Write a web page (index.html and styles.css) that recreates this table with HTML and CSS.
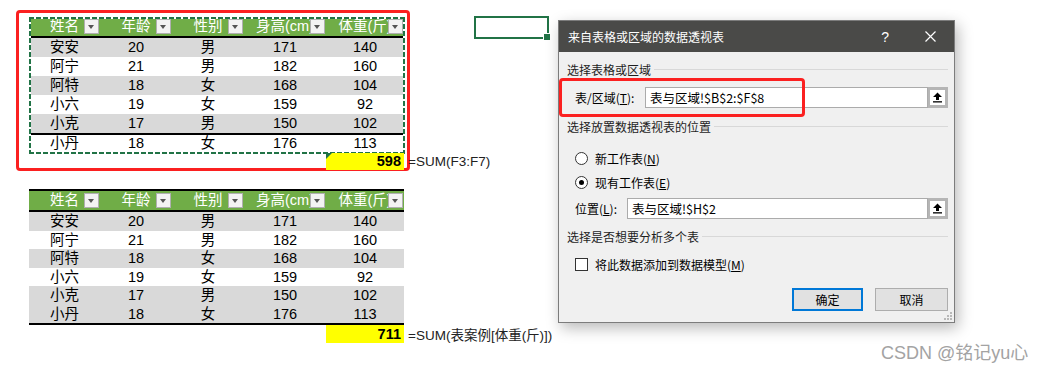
FILE: index.html
```html
<!DOCTYPE html>
<html>
<head>
<meta charset="utf-8">
<link rel="stylesheet" href="styles.css">
</head>
<body>
<div class="sheet">
  <div class="highlight">
    <div class="tbl tbl-top">
      <div class="row head">
        <div class="c">姓名<span class="fb"></span></div>
        <div class="c">年龄<span class="fb"></span></div>
        <div class="c">性别<span class="fb"></span></div>
        <div class="c">身高(cm)<span class="fb"></span></div>
        <div class="c">体重(斤)<span class="fb"></span></div>
      </div>
      <div class="row g"><div class="c">安安</div><div class="c">20</div><div class="c">男</div><div class="c">171</div><div class="c">140</div></div>
      <div class="row"><div class="c">阿宁</div><div class="c">21</div><div class="c">男</div><div class="c">182</div><div class="c">160</div></div>
      <div class="row g"><div class="c">阿特</div><div class="c">18</div><div class="c">女</div><div class="c">168</div><div class="c">104</div></div>
      <div class="row"><div class="c">小六</div><div class="c">19</div><div class="c">女</div><div class="c">159</div><div class="c">92</div></div>
      <div class="row g"><div class="c">小克</div><div class="c">17</div><div class="c">男</div><div class="c">150</div><div class="c">102</div></div>
      <div class="row last"><div class="c">小丹</div><div class="c">18</div><div class="c">女</div><div class="c">176</div><div class="c">113</div></div>
    </div>
    <div class="total">
      <div class="sum"><i class="err"></i>598</div>
      <span class="formula">=SUM(F3:F7)</span>
    </div>
  </div>

  <div class="tbl tbl-bottom">
    <div class="row head">
      <div class="c">姓名<span class="fb"></span></div>
      <div class="c">年龄<span class="fb"></span></div>
      <div class="c">性别<span class="fb"></span></div>
      <div class="c">身高(cm)<span class="fb"></span></div>
      <div class="c">体重(斤)<span class="fb"></span></div>
    </div>
    <div class="row g"><div class="c">安安</div><div class="c">20</div><div class="c">男</div><div class="c">171</div><div class="c">140</div></div>
    <div class="row"><div class="c">阿宁</div><div class="c">21</div><div class="c">男</div><div class="c">182</div><div class="c">160</div></div>
    <div class="row g"><div class="c">阿特</div><div class="c">18</div><div class="c">女</div><div class="c">168</div><div class="c">104</div></div>
    <div class="row"><div class="c">小六</div><div class="c">19</div><div class="c">女</div><div class="c">159</div><div class="c">92</div></div>
    <div class="row g"><div class="c">小克</div><div class="c">17</div><div class="c">男</div><div class="c">150</div><div class="c">102</div></div>
    <div class="row g"><div class="c">小丹</div><div class="c">18</div><div class="c">女</div><div class="c">176</div><div class="c">113</div></div>
  </div>
  <div class="total total2">
    <div class="sum">711</div>
    <span class="formula">=SUM(表案例[体重(斤)])</span>
  </div>
</div>

<div class="active-cell"><span class="handle"></span></div>

<div class="dialog">
  <div class="title">
    <span class="title-text">来自表格或区域的数据透视表</span>
    <span class="help">?</span>
    <svg class="close" width="11" height="11" viewBox="0 0 11 11"><path d="M0.5 0.5 L10.5 10.5 M10.5 0.5 L0.5 10.5" stroke="#fff" stroke-width="1.2"/></svg>
  </div>
  <div class="body">
    <div class="heading">选择表格或区域</div>
    <div class="field-row">
      <span class="label label1">表/区域(<u>T</u>):</span>
      <div class="input">表与区域!$B$2:$F$8</div>
      <div class="pick"><svg width="11" height="11" viewBox="0 0 11 11"><path d="M5.5 0.5 L10 5 H7 V8 H4 V5 H1 Z" fill="#000"/><rect x="1" y="9.2" width="9" height="1.3" fill="#000"/></svg></div>
    </div>
    <div class="heading h2">选择放置数据透视表的位置</div>
    <div class="radios">
      <div class="opt"><span class="radio"></span>新工作表(<u>N</u>)</div>
      <div class="opt"><span class="radio on"></span>现有工作表(<u>E</u>)</div>
    </div>
    <div class="field-row fr2">
      <span class="label label2">位置(<u>L</u>):</span>
      <div class="input">表与区域!$H$2</div>
      <div class="pick"><svg width="11" height="11" viewBox="0 0 11 11"><path d="M5.5 0.5 L10 5 H7 V8 H4 V5 H1 Z" fill="#000"/><rect x="1" y="9.2" width="9" height="1.3" fill="#000"/></svg></div>
    </div>
    <div class="heading h3">选择是否想要分析多个表</div>
    <div class="opt check-row"><span class="checkbox"></span>将此数据添加到数据模型(<u>M</u>)</div>
    <div class="buttons">
      <div class="btn primary">确定</div>
      <div class="btn">取消</div>
    </div>
  </div>
  <svg class="grip" width="8" height="8" viewBox="0 0 8 8">
    <rect x="6" y="0" width="2" height="2" fill="#b8b8b8"/>
    <rect x="3" y="3" width="2" height="2" fill="#b8b8b8"/>
    <rect x="6" y="3" width="2" height="2" fill="#b8b8b8"/>
    <rect x="0" y="6" width="2" height="2" fill="#b8b8b8"/>
    <rect x="3" y="6" width="2" height="2" fill="#b8b8b8"/>
    <rect x="6" y="6" width="2" height="2" fill="#b8b8b8"/>
  </svg>
  <div class="mark"></div>
</div>

<div class="watermark">CSDN @铭记yu心</div>
</body>
</html>
```

FILE: styles.css
```css
html, body {
  margin: 0;
  padding: 0;
}
body {
  width: 1046px;
  height: 369px;
  overflow: hidden;
  background: #fff;
  position: relative;
  font-family: "Liberation Sans", "Noto Sans CJK SC", sans-serif;
  color: #000;
}

.sheet {
  padding: 10px 0 0 16px;
  display: flex;
  flex-direction: column;
  align-items: flex-start;
}

.highlight {
  width: 394px;
  height: 161px;
  box-sizing: border-box;
  border: 3px solid #fb2020;
  border-radius: 4px;
  padding: 4px 0 0 10px;
}

.tbl {
  width: 375px;
  position: relative;
  font-size: 14.5px;
}

.row {
  display: grid;
  grid-template-columns: 71px 72px 72px 82px 78px;
  height: 19px;
  line-height: 19px;
  text-align: center;
}

.c {
  position: relative;
  overflow: hidden;
  white-space: nowrap;
}

.head {
  background: #70ad47;
  color: #fff;
  border-bottom: 2px solid #000;
}

.g {
  background: #d9d9d9;
}

.fb {
  position: absolute;
  right: 1px;
  top: 2px;
  width: 15px;
  height: 15px;
  box-sizing: border-box;
  border: 1px solid #b0b0b0;
  background: #f3f3f3;
}
.fb::after {
  content: "";
  position: absolute;
  left: 3px;
  top: 5px;
  border-left: 3.5px solid transparent;
  border-right: 3.5px solid transparent;
  border-top: 4px solid #555;
}

.tbl-top .last {
  border-top: 2px solid #000;
  height: 17px;
  line-height: 17px;
}

.tbl-top::after {
  content: "";
  position: absolute;
  top: 0;
  left: 0;
  right: -1px;
  bottom: -2px;
  background:
    repeating-linear-gradient(90deg, #217346 0 5px, #fff 5px 7px) top left / 100% 2px no-repeat,
    repeating-linear-gradient(90deg, #217346 0 5px, #fff 5px 7px) bottom left / 100% 2px no-repeat,
    repeating-linear-gradient(180deg, #217346 0 5px, #fff 5px 7px) top left / 2px 100% no-repeat,
    repeating-linear-gradient(180deg, #217346 0 5px, #fff 5px 7px) top right / 2px 100% no-repeat;
}

.total {
  display: flex;
  align-items: center;
  margin: 1px 0 0 297px;
  height: 17px;
}
.sum {
  flex: none;
  width: 78px;
  height: 17px;
  line-height: 17px;
  background: #ffff00;
  text-align: right;
  font-weight: bold;
  font-size: 14.5px;
  padding-right: 3px;
  box-sizing: border-box;
  position: relative;
}
.err {
  position: absolute;
  left: 0;
  top: 0;
  width: 0;
  height: 0;
  border-top: 6px solid #217346;
  border-right: 6px solid transparent;
}
.formula {
  flex: none;
  margin-left: 4px;
  font-size: 13.5px;
  color: #222;
  white-space: nowrap;
}

.tbl-bottom {
  margin: 18px 0 0 13px;
  border-top: 2px solid #000;
  border-bottom: 2px solid #000;
}
.tbl-bottom .row:not(.head) {
  height: 18.5px;
  line-height: 18.5px;
}
.total2 {
  margin: 0 0 0 310px;
  height: 18px;
}
.total2 .sum {
  height: 18px;
  line-height: 18px;
}

.active-cell {
  position: absolute;
  left: 474px;
  top: 16px;
  width: 75px;
  height: 23px;
  box-sizing: border-box;
  border: 2px solid #217346;
}
.handle {
  position: absolute;
  right: -4px;
  bottom: -4px;
  width: 6px;
  height: 6px;
  background: #217346;
  border: 1px solid #fff;
}

.dialog {
  position: absolute;
  left: 558px;
  top: 20px;
  width: 397px;
  height: 303px;
  box-sizing: border-box;
  background: #f0f0f0;
  border: 1px solid #7c7c7c;
  box-shadow: 3px 5px 14px rgba(0, 0, 0, 0.28);
  font-family: "Noto Sans CJK SC", sans-serif;
  font-size: 12px;
  color: #000;
  display: flex;
  flex-direction: column;
}

.mark {
  position: absolute;
  left: 0;
  top: 57px;
  width: 246px;
  height: 39px;
  box-sizing: border-box;
  border: 3px solid #fb2020;
  border-radius: 4px;
}

.title {
  height: 31px;
  background: #4a4a48;
  color: #fff;
  display: flex;
  align-items: center;
  padding-left: 9px;
  flex: none;
}
.title-text {
  flex: 1;
}
.help {
  font-family: "Liberation Sans", sans-serif;
  font-size: 14px;
  margin-right: 36px;
}
.close {
  margin-right: 18px;
}

.body {
  padding: 11px 6px 0 8px;
  display: flex;
  flex-direction: column;
}

.heading {
  display: flex;
  align-items: center;
  height: 14px;
  line-height: 14px;
  white-space: nowrap;
  color: #1e1e1e;
}
.heading::after {
  content: "";
  flex: 1;
  height: 1px;
  background: #d8d8d8;
  margin-left: 3px;
  margin-top: -1px;
}
.h2 {
  margin-top: 12px;
}
.h3 {
  margin-top: 11px;
}

.field-row {
  display: flex;
  align-items: center;
  margin: 10px 0 0 8px;
  height: 21px;
}
.fr2 {
  margin-top: 4px;
}
.label {
  flex: none;
}
.label1 {
  width: 70px;
}
.label2 {
  width: 52px;
}
.input {
  flex: 1;
  height: 21px;
  box-sizing: border-box;
  border: 1px solid #ababab;
  background: #fff;
  padding-left: 4px;
  line-height: 19px;
  font-size: 12.5px;
}
.pick {
  flex: none;
  width: 20px;
  height: 21px;
  box-sizing: border-box;
  border: 3px solid #b5b5b5;
  border-left-width: 2px;
  background: #fff;
  display: flex;
  align-items: center;
  justify-content: center;
}

.radios {
  margin: 12px 0 0 8px;
  display: flex;
  flex-direction: column;
}
.opt {
  display: flex;
  align-items: center;
  height: 24px;
  white-space: nowrap;
}
.radio {
  width: 13px;
  height: 13px;
  box-sizing: border-box;
  border: 1px solid #333;
  border-radius: 50%;
  background: #fff;
  margin-right: 7px;
  position: relative;
}
.radio.on::after {
  content: "";
  position: absolute;
  left: 3px;
  top: 3px;
  width: 5px;
  height: 5px;
  border-radius: 50%;
  background: #000;
}

.check-row {
  margin: 12px 0 0 8px;
  height: 16px;
}
.checkbox {
  width: 13px;
  height: 13px;
  box-sizing: border-box;
  border: 1px solid #333;
  background: #fff;
  margin-right: 7px;
}

.buttons {
  display: flex;
  justify-content: flex-end;
  gap: 12px;
  margin-top: 16px;
}
.btn {
  width: 73px;
  height: 23px;
  box-sizing: border-box;
  border: 1px solid #adadad;
  background: #e1e1e1;
  display: flex;
  align-items: center;
  justify-content: center;
}
.btn.primary {
  width: 71px;
  border: 2px solid #0078d7;
}

.grip {
  position: absolute;
  right: 2px;
  bottom: 2px;
}

.watermark {
  position: absolute;
  left: 881px;
  top: 338px;
  font-size: 18px;
  color: #a3a3a3;
  white-space: nowrap;
  font-family: "Liberation Sans", "Noto Sans CJK SC", sans-serif;
}
```
